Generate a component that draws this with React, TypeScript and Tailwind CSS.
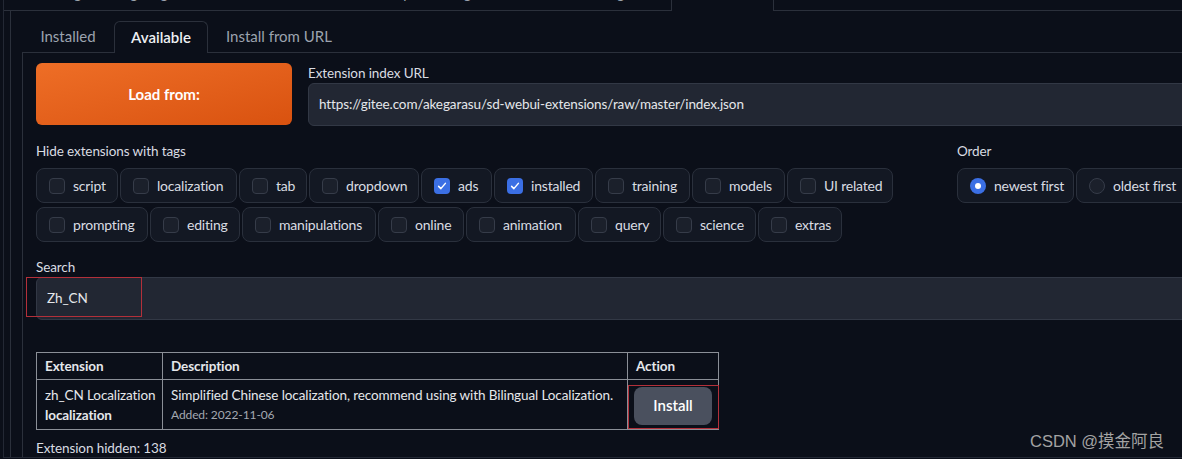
import React from "react";

type Tag = { label: string; w: string; checked?: boolean };

const row1: Tag[] = [
  { label: "script", w: "w-[82px]" },
  { label: "localization", w: "w-[117px]" },
  { label: "tab", w: "w-[68px]" },
  { label: "dropdown", w: "w-[110px]" },
  { label: "ads", w: "w-[71px]", checked: true },
  { label: "installed", w: "w-[99px]", checked: true },
  { label: "training", w: "w-[95px]" },
  { label: "models", w: "w-[93px]" },
  { label: "UI related", w: "w-[106px]" },
];

const row2: Tag[] = [
  { label: "prompting", w: "w-[112px]" },
  { label: "editing", w: "w-[90px]" },
  { label: "manipulations", w: "w-[134px]" },
  { label: "online", w: "w-[86px]" },
  { label: "animation", w: "w-[110px]" },
  { label: "query", w: "w-[83px]" },
  { label: "science", w: "w-[93px]" },
  { label: "extras", w: "w-[84px]" },
];

function Check({ checked }: { checked?: boolean }) {
  if (checked) {
    return (
      <span className="flex h-4 w-4 shrink-0 items-center justify-center rounded-[4px] bg-[#3b6fe4]">
        <svg viewBox="0 0 16 16" className="h-3 w-3" fill="none">
          <path d="M3.5 8.5l3 3 6-7" stroke="white" strokeWidth="2" strokeLinecap="round" strokeLinejoin="round" />
        </svg>
      </span>
    );
  }
  return <span className="h-4 w-4 shrink-0 rounded-[4px] border border-[#363c49] bg-[#1b202b]" />;
}

function Pill({ tag }: { tag: Tag }) {
  return (
    <div
      className={`flex h-[35px] ${tag.w} shrink-0 items-center gap-[8px] whitespace-nowrap rounded-lg border border-[#2a303c] bg-[#131823] pl-3 text-[14px] tracking-[-0.2px] text-[#d9dce2]`}
    >
      <Check checked={tag.checked} />
      <span>{tag.label}</span>
    </div>
  );
}

function Radio({ label, on, w }: { label: string; on?: boolean; w: string }) {
  return (
    <div
      className={`flex h-[35px] ${w} shrink-0 items-center gap-[8px] whitespace-nowrap rounded-lg border border-[#2a303c] bg-[#131823] pl-3 text-[14px] tracking-[-0.2px] text-[#d9dce2]`}
    >
      {on ? (
        <span className="flex h-4 w-4 items-center justify-center rounded-full bg-[#3b6fe4]">
          <span className="h-[6px] w-[6px] rounded-full bg-white" />
        </span>
      ) : (
        <span className="h-4 w-4 rounded-full border border-[#363c49] bg-[#1b202b]" />
      )}
      <span>{label}</span>
    </div>
  );
}

export default function App() {
  return (
    <div className="relative h-[459px] w-[1182px] overflow-hidden bg-[#0b0f19] font-['Lato','Noto_Sans',sans-serif]">
      <div className="ml-[3px] flex h-[458px] flex-col overflow-hidden border-b border-l border-[#232834]">
        {/* top tab strip, mostly cropped */}
        <div className="flex h-[11px] shrink-0 border-b border-[#2b303b]">
          <div className="h-[10px] w-[667px] overflow-hidden">
            <div className="-mt-[16px] flex gap-[34px] pl-[30px] text-[14px] leading-[20px] text-[#9ca3af]">
              <span>txt2img</span>
              <span>img2img</span>
              <span>Extras</span>
              <span>PNG Info</span>
              <span>Checkpoint Merger</span>
              <span>Train</span>
              <span>Settings</span>
            </div>
          </div>
          <div className="-mb-px h-[11px] w-[103px] overflow-hidden border-x border-[#2b303b] bg-[#0b0f19]">
            <div className="-mt-[16px] text-center text-[14px] leading-[20px] text-[#e5e7eb]">Extensions</div>
          </div>
        </div>

        <div className="ml-[6px] flex flex-1 flex-col border-l border-[#2b303b] pl-[11px]">
          {/* inner tabs */}
          <div className="mt-[10px] flex h-[32px] shrink-0 border-b border-[#2b303b] text-[15px]">
            <div className="flex w-[92px] items-center justify-center text-[#9ca3af]">Installed</div>
            <div className="-mb-px flex w-[94px] items-center justify-center rounded-t-md border-x border-t border-[#2b303b] bg-[#0b0f19] font-semibold text-[#eef0f3]">
              Available
            </div>
            <div className="flex items-center px-[18px] text-[#9ca3af]">Install from URL</div>
          </div>

          <div className="flex flex-1 flex-col border-l border-[#2b303b] pl-[13px] pt-[10px] text-[13.5px] tracking-[-0.1px]">
            <div className="flex w-[1200px] flex-col">
              {/* load row */}
              <div className="flex gap-4">
                <button className="h-[62px] w-[256px] shrink-0 rounded-md bg-gradient-to-br from-[#ee6e26] to-[#d9520f] text-[15px] font-bold tracking-normal text-white">
                  Load from:
                </button>
                <div className="flex flex-1 flex-col">
                  <div className="h-[20px] leading-[20px] text-[#d9dce2]">Extension index URL</div>
                  <div className="flex h-[43px] items-center rounded-md border border-[#323845] bg-[#222733] px-[10px] text-[#e5e7eb]">
                    https://gitee.com/akegarasu/sd-webui-extensions/raw/master/index.json
                  </div>
                </div>
              </div>

              {/* tags + order */}
              <div className="mt-[15px] flex gap-4">
                <div className="flex w-[905px] shrink-0 flex-col">
                  <div className="h-[20px] leading-[20px] text-[#d9dce2]">Hide extensions with tags</div>
                  <div className="mt-[7px] flex gap-[2px]">
                    {row1.map((t) => (
                      <Pill key={t.label} tag={t} />
                    ))}
                  </div>
                  <div className="mt-[4px] flex gap-[2px]">
                    {row2.map((t) => (
                      <Pill key={t.label} tag={t} />
                    ))}
                  </div>
                </div>
                <div className="flex flex-col">
                  <div className="h-[20px] leading-[20px] text-[#d9dce2]">Order</div>
                  <div className="mt-[7px] flex gap-[2px]">
                    <Radio label="newest first" on w="w-[117px]" />
                    <Radio label="oldest first" w="w-[117px]" />
                  </div>
                </div>
              </div>

              {/* search */}
              <div className="mt-[15px] h-[20px] leading-[20px] text-[#d9dce2]">Search</div>
              <div className="flex h-[43px] items-center rounded-md border border-[#323845] bg-[#222733] px-[10px] text-[#e5e7eb]">
                Zh_CN
              </div>

              {/* results table */}
              <table className="mt-[32px] w-[683px] table-fixed border-collapse whitespace-nowrap text-[#e5e7eb]">
                <thead>
                  <tr className="h-[27px]">
                    <th className="w-[126px] border border-[#8b8f97] px-2 text-left font-bold">Extension</th>
                    <th className="w-[465px] border border-[#8b8f97] px-2 text-left font-bold">Description</th>
                    <th className="border border-[#8b8f97] px-2 text-left font-bold">Action</th>
                  </tr>
                </thead>
                <tbody>
                  <tr className="h-[50px]">
                    <td className="border border-[#8b8f97] pl-2 pr-0 align-middle leading-[20px]">
                      <div>zh_CN Localization</div>
                      <div className="font-bold">localization</div>
                    </td>
                    <td className="border border-[#8b8f97] px-2 align-middle leading-[20px]">
                      <div>Simplified Chinese localization, recommend using with Bilingual Localization.</div>
                      <div className="text-[12px] text-[#a3a8b1]">Added: 2022-11-06</div>
                    </td>
                    <td className="border border-[#8b8f97] px-[6px] pb-[3px] pt-[5px] align-middle">
                      <button className="h-[38px] w-[78px] rounded-lg bg-[#4a505e] text-[15px] font-semibold tracking-normal text-white">
                        Install
                      </button>
                    </td>
                  </tr>
                </tbody>
              </table>

              <div className="mt-[8px] h-[20px] leading-[20px] text-[#d9dce2]">Extension hidden: 138</div>
            </div>
          </div>
        </div>
      </div>

      {/* red annotation boxes */}
      <div className="absolute left-[26px] top-[277px] h-[40px] w-[116px] border-[1.5px] border-[#b3303a]" />
      <div className="absolute left-[628px] top-[385px] h-[44px] w-[91px] border-[1.5px] border-[#b3303a]" />

      {/* watermark */}
      <div className="absolute left-[1030px] top-[430px] font-['Liberation_Sans','Noto_Sans_CJK_SC',sans-serif] text-[16.5px] leading-[22px] text-[#a3a3a3]">
        CSDN @摸金阿良
      </div>
    </div>
  );
}
